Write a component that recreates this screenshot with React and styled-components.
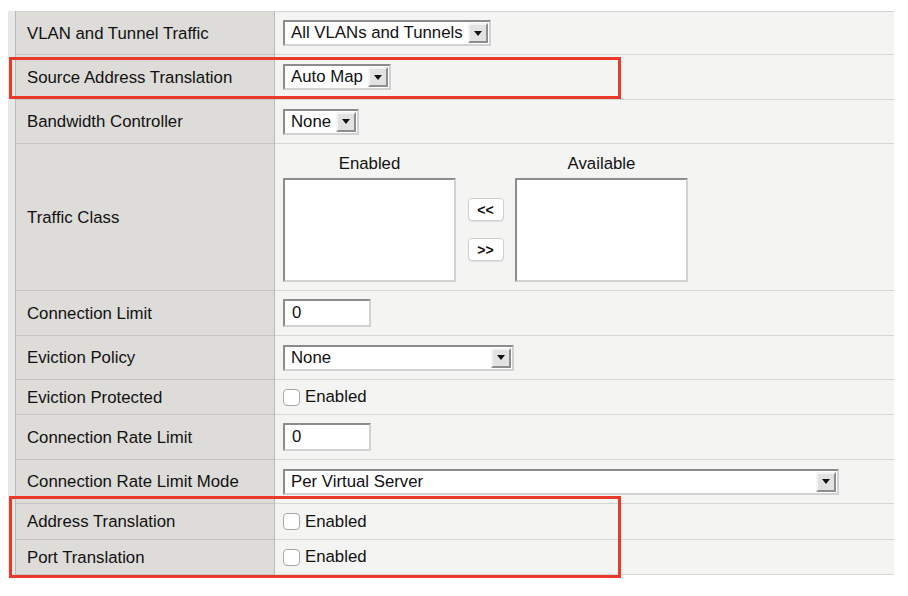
import React from "react";
import styled, { createGlobalStyle } from "styled-components";

const GlobalStyle = createGlobalStyle`
  html, body {
    margin: 0;
    padding: 0;
    background: #ffffff;
  }
  body {
    font-family: "Liberation Sans", Arial, Helvetica, sans-serif;
    font-size: 16.8px;
    color: #111;
  }
`;

const Page = styled.div`
  position: relative;
  width: 908px;
  height: 596px;
  padding: 11px 0 0 8px;
  box-sizing: border-box;
`;

const Frame = styled.div`
  display: flex;
  width: 886px;
`;

const Strip = styled.div`
  width: 7px;
  background: #e8e8e6;
  border-right: 1px solid #b8b8b6;
`;

const Table = styled.div`
  flex: 1;
  border-top: 1px solid #d3d3d1;
`;

const Row = styled.div`
  display: grid;
  grid-template-columns: 259px 1fr;
  height: ${(p) => p.h}px;
  box-sizing: border-box;
  border-bottom: 1px solid #d6d6d4;
`;

const Label = styled.div`
  background: #dddcd9;
  border-right: 1px solid #b9b9b7;
  display: flex;
  align-items: center;
  padding-left: 11px;
  box-shadow: inset 0 -1px 0 #c6c6c4;
  margin-bottom: -1px;
`;

const Value = styled.div`
  background: #f4f4f3;
  display: flex;
  align-items: center;
  padding-left: 8px;
`;

const SelectBox = styled.div`
  display: flex;
  align-items: center;
  justify-content: space-between;
  box-sizing: border-box;
  height: 26px;
  width: ${(p) => (p.w ? `${p.w}px` : "auto")};
  background: #fff;
  border: 2px solid;
  border-color: #8c8c8c #d2d2d2 #d2d2d2 #8c8c8c;
  padding-left: 6px;
`;

const SelectText = styled.span`
  padding-right: 5px;
  white-space: nowrap;
`;

const Arrow = styled.span`
  width: 20px;
  height: 20px;
  box-sizing: border-box;
  margin-right: 1px;
  background: #e2e2e2;
  border: 2px solid;
  border-color: #f4f4f4 #8e8e8e #8e8e8e #f4f4f4;
  display: flex;
  align-items: center;
  justify-content: center;
  &::after {
    content: "";
    border-left: 4px solid transparent;
    border-right: 4px solid transparent;
    border-top: 5px solid #111;
  }
`;

const TextInput = styled.div`
  width: 88px;
  height: 28px;
  box-sizing: border-box;
  background: #fff;
  border: 2px solid;
  border-color: #8c8c8c #d2d2d2 #d2d2d2 #8c8c8c;
  padding-left: 7px;
  display: flex;
  align-items: center;
`;

const Check = styled.label`
  display: flex;
  align-items: center;
  gap: 5px;
  &::before {
    content: "";
    width: 15px;
    height: 15px;
    border: 1px solid #a8a8a8;
    border-radius: 4px;
    background: #fff;
  }
`;

const Swap = styled.div`
  display: flex;
  align-items: flex-start;
  padding-top: 10px;
  align-self: stretch;
`;

const ListCol = styled.div`
  display: flex;
  flex-direction: column;
  align-items: center;
  width: 173px;
`;

const ListTitle = styled.div`
  height: 20px;
  line-height: 20px;
  margin-bottom: 4px;
`;

const ListBox = styled.div`
  width: 173px;
  height: 104px;
  box-sizing: border-box;
  background: #fff;
  border: 2px solid;
  border-color: #8c8c8c #d2d2d2 #d2d2d2 #8c8c8c;
`;

const Movers = styled.div`
  width: 59px;
  display: flex;
  flex-direction: column;
  align-items: center;
  gap: 17px;
  padding-top: 44px;
`;

const MoveBtn = styled.button`
  width: 36px;
  height: 23px;
  background: #fff;
  border: 1px solid #cfcfcf;
  border-radius: 4px;
  font-family: "Liberation Sans", Arial, sans-serif;
  font-size: 14px;
  font-weight: bold;
  color: #111;
  padding: 0;
  box-shadow: 0 1px 1px rgba(0, 0, 0, 0.08);
`;

const Highlight = styled.div`
  position: absolute;
  left: 9px;
  width: 612px;
  box-sizing: border-box;
  border: 3px solid #e8392b;
  pointer-events: none;
`;

const Select = ({ text, w }) => (
  <SelectBox w={w}>
    <SelectText>{text}</SelectText>
    <Arrow />
  </SelectBox>
);

export default function App() {
  return (
    <>
      <GlobalStyle />
      <Page>
        <Frame>
          <Strip />
          <Table>
            <Row h={43}>
              <Label>VLAN and Tunnel Traffic</Label>
              <Value>
                <Select text="All VLANs and Tunnels" />
              </Value>
            </Row>
            <Row h={45}>
              <Label>Source Address Translation</Label>
              <Value>
                <Select text="Auto Map" />
              </Value>
            </Row>
            <Row h={44}>
              <Label>Bandwidth Controller</Label>
              <Value>
                <Select text="None" />
              </Value>
            </Row>
            <Row h={147}>
              <Label>Traffic Class</Label>
              <Value>
                <Swap>
                  <ListCol>
                    <ListTitle>Enabled</ListTitle>
                    <ListBox />
                  </ListCol>
                  <Movers>
                    <MoveBtn>&lt;&lt;</MoveBtn>
                    <MoveBtn>&gt;&gt;</MoveBtn>
                  </Movers>
                  <ListCol>
                    <ListTitle>Available</ListTitle>
                    <ListBox />
                  </ListCol>
                </Swap>
              </Value>
            </Row>
            <Row h={45}>
              <Label>Connection Limit</Label>
              <Value>
                <TextInput>0</TextInput>
              </Value>
            </Row>
            <Row h={44}>
              <Label>Eviction Policy</Label>
              <Value>
                <Select text="None" w={231} />
              </Value>
            </Row>
            <Row h={35}>
              <Label>Eviction Protected</Label>
              <Value>
                <Check>Enabled</Check>
              </Value>
            </Row>
            <Row h={45}>
              <Label>Connection Rate Limit</Label>
              <Value>
                <TextInput>0</TextInput>
              </Value>
            </Row>
            <Row h={44}>
              <Label>Connection Rate Limit Mode</Label>
              <Value>
                <Select text="Per Virtual Server" w={556} />
              </Value>
            </Row>
            <Row h={36}>
              <Label>Address Translation</Label>
              <Value>
                <Check>Enabled</Check>
              </Value>
            </Row>
            <Row h={35}>
              <Label>Port Translation</Label>
              <Value>
                <Check>Enabled</Check>
              </Value>
            </Row>
          </Table>
        </Frame>
        <Highlight style={{ top: 57, height: 42 }} />
        <Highlight style={{ top: 496, height: 82 }} />
      </Page>
    </>
  );
}
